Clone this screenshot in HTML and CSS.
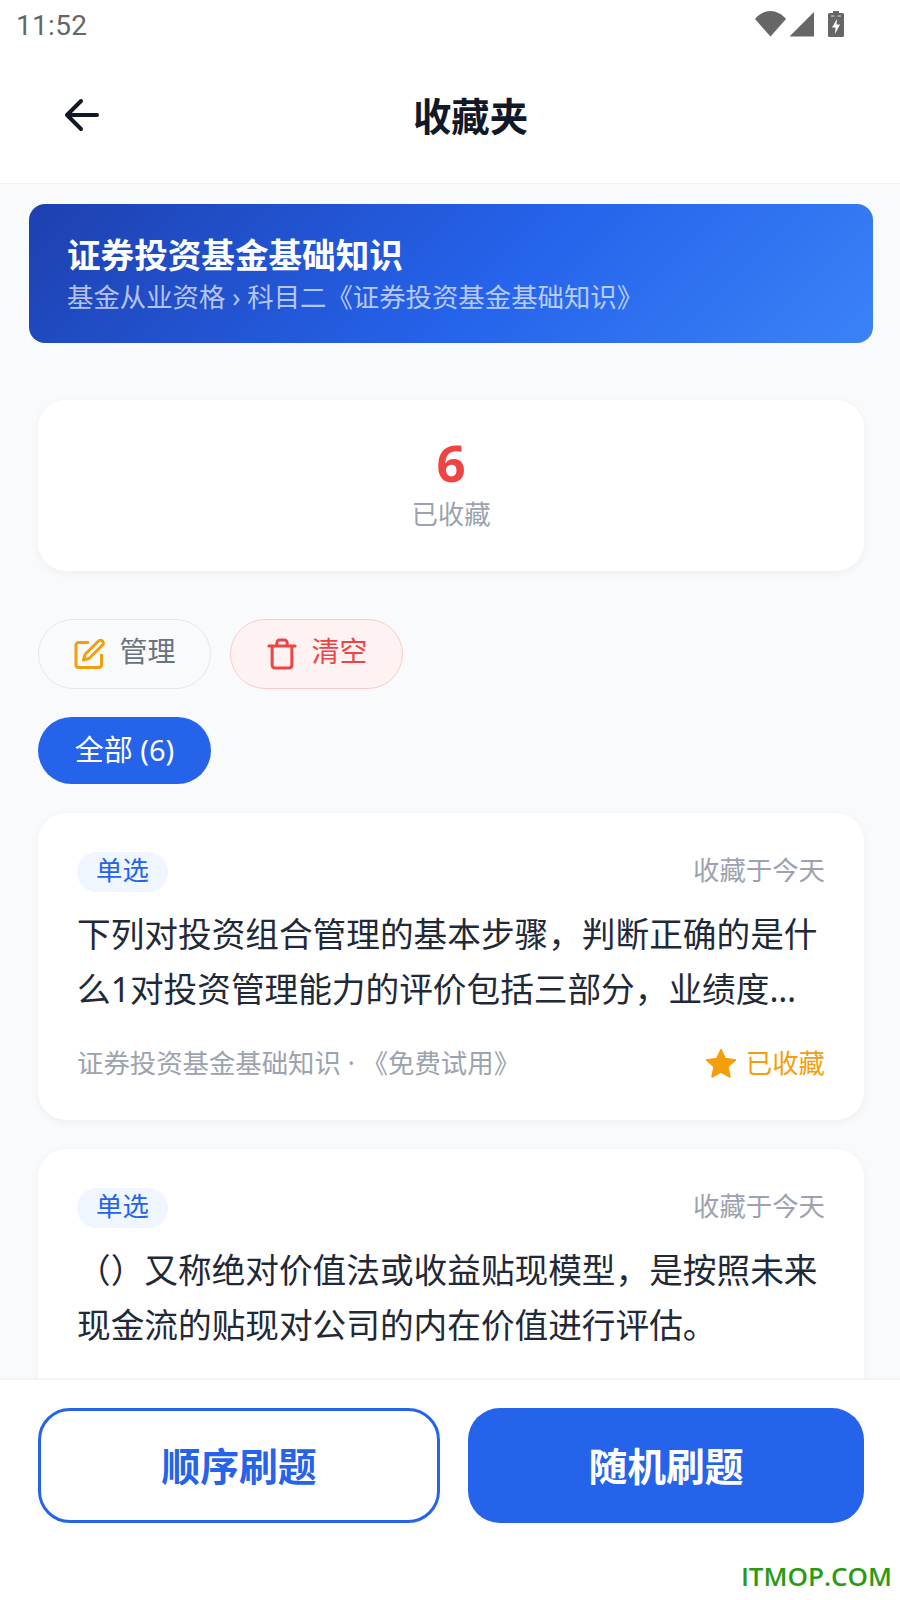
FILE: index.html
```html
<!DOCTYPE html>
<html lang="zh-CN">
<head>
<meta charset="utf-8">
<title>收藏夹</title>
<link rel="stylesheet" href="styles.css">
</head>
<body>
<div class="app">
  <div class="status">
    <span class="time">11:52</span>
    <div class="status-icons">
      <svg class="i-wifi" width="31" height="26" viewBox="0 0 31 26"><path d="M0 8C4 3 10 0 15.500 0S27 3 31 8L15.500 25.500Z" fill="#666"/></svg>
      <svg class="i-signal" width="25" height="26" viewBox="0 0 25 26"><path d="M25 1V25.500H.5Z" fill="#666"/></svg>
      <svg class="i-batt" width="16" height="26" viewBox="0 0 16 26"><path d="M5 0H11V2H14.500A1.500 1.500 0 0 1 16 3.500V24.500A1.500 1.500 0 0 1 14.500 26H1.500A1.500 1.500 0 0 1 0 24.500V3.500A1.500 1.500 0 0 1 1.500 2H5Z" fill="#666"/><path d="M9 8L4 16.500H7.500L7 23L12 13.500H8.500Z" fill="#fff"/><path d="M3 5H6.500M9.500 5H13" stroke="#ddd" stroke-width="1"/></svg>
    </div>
  </div>
  <header class="nav">
    <svg class="back" width="36" height="34" viewBox="0 0 36 34"><path d="M33 17H3.500M17 3L3 17L17 31" fill="none" stroke="#111827" stroke-width="4" stroke-linecap="round" stroke-linejoin="round"/></svg>
    <h1 class="nav-title">收藏夹</h1>
  </header>
  <main class="content">
    <section class="banner">
      <div class="banner-title">证券投资基金基础知识</div>
      <div class="banner-sub">基金从业资格 › 科目二《证券投资基金基础知识》</div>
    </section>
    <div class="inner">
      <section class="stat">
        <div class="stat-num">6</div>
        <div class="stat-label">已收藏</div>
      </section>
      <div class="actions">
        <div class="pill pill-manage">
          <svg width="32" height="32" viewBox="0 0 32 32"><path d="M15 4.500H5.500A2.500 2.500 0 0 0 3 7V27A2.500 2.500 0 0 0 5.500 29.500H26A2.500 2.500 0 0 0 28.500 27V17" fill="none" stroke="#f59e0b" stroke-width="3" stroke-linecap="round"/><path d="M26 2.500A3 3 0 0 1 30 6.500L16 20.500L10.500 22L12 16.500Z" fill="none" stroke="#f59e0b" stroke-width="3" stroke-linejoin="round"/></svg>
          <span>管理</span>
        </div>
        <div class="pill pill-clear">
          <svg width="30" height="32" viewBox="0 0 32 34"><path d="M2 8.500H30M5.500 8.500V29A3 3 0 0 0 8.500 32H23.500A3 3 0 0 0 26.500 29V8.500M10.500 8.500V5A3 3 0 0 1 13.500 2H18.500A3 3 0 0 1 21.500 5V8.500" fill="none" stroke="#ef4444" stroke-width="3.200" stroke-linecap="round"/></svg>
          <span>清空</span>
        </div>
      </div>
      <div class="filter">全部 (6)</div>
      <article class="card">
        <div class="card-top"><span class="tag">单选</span><span class="when">收藏于今天</span></div>
        <p class="q">下列对投资组合管理的基本步骤，判断正确的是什么1对投资管理能力的评价包括三部分，业绩度…</p>
        <div class="card-foot">
          <span class="src">证券投资基金基础知识 · 《免费试用》</span>
          <span class="saved"><svg width="32" height="30" viewBox="0 0 32 30"><path d="M16 1.500L20.300 10.600L30.500 11.900L23 18.800L25 29L16 24L7 29L9 18.800L1.500 11.900L11.700 10.600Z" fill="#f59e0b" stroke="#f59e0b" stroke-width="1.500" stroke-linejoin="round"/></svg>已收藏</span>
        </div>
      </article>
      <article class="card">
        <div class="card-top"><span class="tag">单选</span><span class="when">收藏于今天</span></div>
        <p class="q">（）又称绝对价值法或收益贴现模型，是按照未来现金流的贴现对公司的内在价值进行评估。</p>
      </article>
    </div>
  </main>
  <footer class="bottom">
    <div class="btn btn-outline">顺序刷题</div>
    <div class="btn btn-solid">随机刷题</div>
    <span class="mark">ITMOP.COM</span>
  </footer>
</div>
</body>
</html>
```
FILE: styles.css
```css
* { box-sizing: border-box; }
html, body { margin: 0; padding: 0; }
body { font-family: "Noto Sans", "Noto Sans CJK SC", sans-serif; background: #fff; }
.app { width: 900px; height: 1600px; display: flex; flex-direction: column; overflow: hidden; background: #f9fafb; }
.status { height: 50px; flex: none; background: #fff; display: flex; justify-content: space-between; align-items: center; padding: 0 56px 0 16px; }
.time { font-family: Roboto, sans-serif; font-size: 28px; color: #666; letter-spacing: 0.3px; }
.status-icons { display: flex; align-items: center; gap: 3px; margin-top: -3px; }
.i-batt { margin-left: 11px; }
.nav { height: 134px; flex: none; background: #fff; border-bottom: 1px solid #f0f1f3; display: flex; align-items: center; justify-content: center; position: relative; padding-left: 41px; padding-bottom: 1px; }
.back { position: absolute; left: 64px; top: 48px; }
.nav-title { margin: 0; font-size: 38.400px; font-weight: 700; color: #111827; line-height: 1.2; }
.content { flex: 1; min-height: 0; overflow: hidden; padding: 20px 27px 0 29px; }
.banner { height: 139px; border-radius: 16px; background: linear-gradient(135deg, #1e40af 0%, #2563eb 55%, #3b82f6 100%); padding: 27px 38px 0; }
.banner-title { font-size: 33.600px; font-weight: 700; color: #fff; line-height: 48px; }
.banner-sub { font-size: 26.400px; line-height: 36px; color: rgba(255,255,255,.68); }
.inner { padding: 57px 9px 0; }
.stat { height: 171px; background: #fff; border-radius: 28px; box-shadow: 0 2px 8px rgba(0,0,0,.05); display: flex; flex-direction: column; align-items: center; padding-top: 28px; }
.stat-num { font-size: 51px; font-weight: 700; line-height: 68px; color: #ef4444; }
.stat-label { font-size: 26.400px; line-height: 37px; color: #9ca3af; }
.actions { display: flex; gap: 19px; margin-top: 48px; }
.pill { width: 173px; height: 70px; border-radius: 35px; display: flex; align-items: center; justify-content: center; gap: 14px; font-size: 28px; }
.pill span { margin-top: -8px; }
.pill svg { flex: none; }
.pill-manage { border: 1px solid #e5e7eb; color: #6b7280; }
.pill-clear { border: 1px solid #fecaca; background: #fef2f2; color: #ef4444; }
.pill-clear svg { margin-left: 2px; }
.filter { width: 173px; height: 67px; margin-top: 28px; border-radius: 34px; background: #2563eb; color: #fff; font-size: 29px; display: flex; align-items: center; justify-content: center; padding-bottom: 5px; }
.card { background: #fff; border-radius: 28px; box-shadow: 0 2px 8px rgba(0,0,0,.05); padding: 39px 39px 0 39px; height: 307px; margin-top: 29px; }
.card-top { display: flex; justify-content: space-between; align-items: center; }
.tag { width: 91px; height: 40px; border-radius: 20px; background: #eff6ff; color: #2563eb; font-size: 26.400px; display: flex; align-items: center; justify-content: center; line-height: 1; padding-bottom: 3px; }
.when { font-size: 26.400px; color: #9ca3af; line-height: 36px; margin-top: -5px; }
.q { margin: 15px 0 0; font-size: 33.660px; line-height: 54.600px; color: #1f2937; }
.card-foot { display: flex; justify-content: space-between; align-items: center; margin-top: 27px; }
.src { font-size: 26.400px; color: #9ca3af; line-height: 40px; }
.saved { display: flex; align-items: center; gap: 9px; font-size: 26.400px; color: #f59e0b; line-height: 40px; }
.bottom { height: 222px; flex: none; background: #fff; border-top: 2px solid #f3f4f6; padding: 28px 36px 0 38px; display: flex; gap: 28px; align-items: flex-start; position: relative; }
.btn { height: 115px; border-radius: 32px; display: flex; align-items: center; justify-content: center; font-size: 38.800px; font-weight: 700; padding-bottom: 3px; }
.btn-outline { width: 402px; border: 3px solid #2563eb; color: #2563eb; background: #fff; }
.btn-solid { width: 396px; background: #2563eb; color: #fff; }
.mark { position: absolute; right: 8px; bottom: 10px; font-family: "Open Sans", sans-serif; font-size: 26px; font-weight: 600; line-height: 28px; color: #2a9a12; }
```
